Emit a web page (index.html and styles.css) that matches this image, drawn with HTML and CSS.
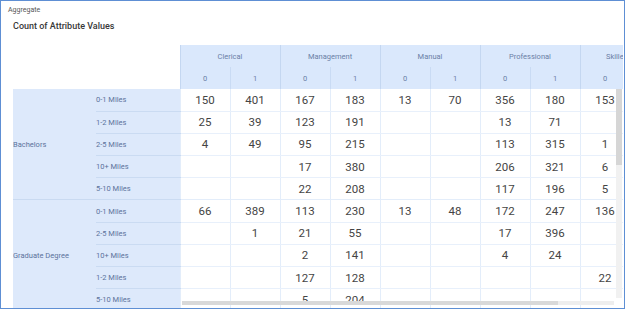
FILE: index.html
```html
<!DOCTYPE html>
<html>
<head>
<meta charset="utf-8">
<link rel="stylesheet" href="styles.css">
</head>
<body>
<div class="frame">
  <div class="agg">Aggregate</div>
  <div class="title">Count of Attribute Values</div>
  <div class="pivot">
    <table class="grid">
      <colgroup>
        <col class="c-group"><col class="c-label">
        <col class="c-val"><col class="c-val"><col class="c-val"><col class="c-val"><col class="c-val">
        <col class="c-val"><col class="c-val"><col class="c-val"><col class="c-val"><col class="c-val">
      </colgroup>
      <thead>
        <tr class="h1">
          <th class="blank" colspan="2" rowspan="2"></th>
          <th class="grp" colspan="2">Clerical</th>
          <th class="grp" colspan="2">Management</th>
          <th class="grp" colspan="2">Manual</th>
          <th class="grp" colspan="2">Professional</th>
          <th class="grp" colspan="2">Skilled Manual</th>
        </tr>
        <tr class="h2">
          <th class="sub first">0</th><th class="sub">1</th>
          <th class="sub first">0</th><th class="sub">1</th>
          <th class="sub first">0</th><th class="sub">1</th>
          <th class="sub first">0</th><th class="sub">1</th>
          <th class="sub first">0</th><th class="sub">1</th>
        </tr>
      </thead>
      <tbody>
        <tr><th class="rg end" rowspan="5">Bachelors</th><th class="rl">0-1 Miles</th>
          <td>150</td><td>401</td><td>167</td><td>183</td><td>13</td><td>70</td><td>356</td><td>180</td><td>153</td><td></td></tr>
        <tr><th class="rl">1-2 Miles</th>
          <td>25</td><td>39</td><td>123</td><td>191</td><td></td><td></td><td>13</td><td>71</td><td></td><td></td></tr>
        <tr><th class="rl">2-5 Miles</th>
          <td>4</td><td>49</td><td>95</td><td>215</td><td></td><td></td><td>113</td><td>315</td><td>1</td><td></td></tr>
        <tr><th class="rl">10+ Miles</th>
          <td></td><td></td><td>17</td><td>380</td><td></td><td></td><td>206</td><td>321</td><td>6</td><td></td></tr>
        <tr class="gend"><th class="rl">5-10 Miles</th>
          <td></td><td></td><td>22</td><td>208</td><td></td><td></td><td>117</td><td>196</td><td>5</td><td></td></tr>
        <tr><th class="rg" rowspan="5">Graduate Degree</th><th class="rl">0-1 Miles</th>
          <td>66</td><td>389</td><td>113</td><td>230</td><td>13</td><td>48</td><td>172</td><td>247</td><td>136</td><td></td></tr>
        <tr><th class="rl">2-5 Miles</th>
          <td></td><td>1</td><td>21</td><td>55</td><td></td><td></td><td>17</td><td>396</td><td></td><td></td></tr>
        <tr><th class="rl">10+ Miles</th>
          <td></td><td></td><td>2</td><td>141</td><td></td><td></td><td>4</td><td>24</td><td></td><td></td></tr>
        <tr><th class="rl">1-2 Miles</th>
          <td></td><td></td><td>127</td><td>128</td><td></td><td></td><td></td><td></td><td>22</td><td></td></tr>
        <tr><th class="rl">5-10 Miles</th>
          <td></td><td></td><td>5</td><td>204</td><td></td><td></td><td></td><td></td><td></td><td></td></tr>
      </tbody>
    </table>
    <div class="vscroll"><div class="vthumb"></div></div>
    <div class="hscroll"><div class="hthumb"></div></div>
  </div>
</div>
</body>
</html>
```

FILE: styles.css
```css
html, body {
  margin: 0;
  padding: 0;
  background: #ffffff;
}
body {
  font-family: Roboto, "Liberation Sans", sans-serif;
}
.frame {
  width: 625px;
  height: 309px;
  box-sizing: border-box;
  border: 1px solid #5e8fd4;
  overflow: hidden;
}
.agg {
  font-size: 7px;
  line-height: 10px;
  color: #555;
  padding: 4px 0 0 7px;
}
.title {
  font-size: 9px;
  line-height: 14px;
  font-weight: 500;
  color: #383838;
  margin: 4px 0 0 12px;
}
.pivot {
  position: relative;
  margin: 12px 0 0 12px;
  width: 610px;
  height: 263px;
  overflow: hidden;
}
.grid {
  border-collapse: collapse;
  table-layout: fixed;
  width: 667px;
}
.c-group { width: 83px; }
.c-label { width: 84px; }
.c-val { width: 50px; }
.grid th, .grid td {
  padding: 0;
  font-weight: normal;
}
.h1 th, .h2 th {
  height: 22px;
  font-size: 7.5px;
  color: #6a7fa6;
  text-align: center;
  white-space: nowrap;
}
.blank { background: #fff; }
.grp {
  background: #dae8fc;
  border-left: 1px solid #c4d7f1;
}
.sub {
  background: #dae8fc;
  border-left: 1px solid #c9dbf4;
}
.sub.first { border-left-color: #c4d7f1; }
.grid tbody tr { height: 22.2px; }
.rg {
  background: #dde9fb;
  font-size: 7.5px;
  color: #5c739b;
  text-align: left;
  padding-left: 3px;
  vertical-align: middle;
}
.rg.end { border-bottom: 1px solid #c9daf1; }
.rl {
  background: #dde9fb;
  font-size: 7.5px;
  color: #5c739b;
  text-align: left;
  border-bottom: 1px solid #cadbf2;
}
.grid td {
  font-size: 11.5px;
  color: #444;
  text-align: center;
  border-left: 1px solid #e3edfa;
  border-bottom: 1px solid #e8f0fb;
}
.gend td { border-bottom-color: #e3edfa; }
.vscroll {
  position: absolute;
  left: 603px;
  top: 44px;
  width: 6px;
  height: 209px;
  background: #f1f1f1;
}
.vthumb {
  height: 76px;
  background: #d6d6d6;
}
.hscroll {
  position: absolute;
  left: 169px;
  top: 256px;
  width: 432px;
  height: 4px;
  background: #eeeeee;
}
.hthumb {
  width: 376px;
  height: 4px;
  background: #d9d9d9;
}
```
